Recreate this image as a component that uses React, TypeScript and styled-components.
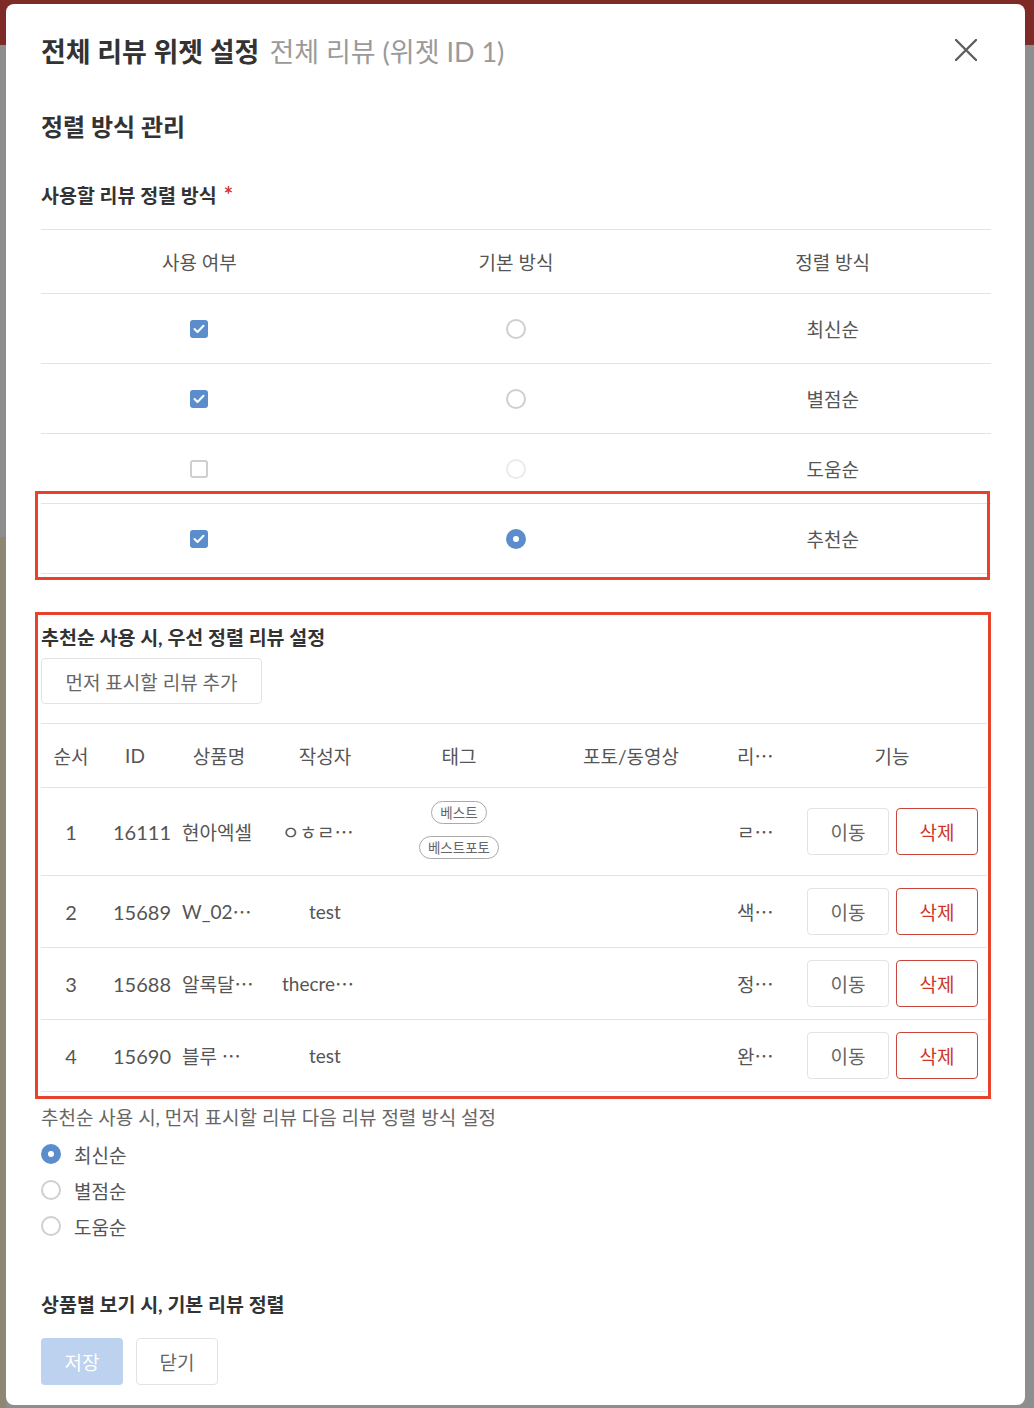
import React from 'react';
import styled, { createGlobalStyle } from 'styled-components';

const GlobalStyle = createGlobalStyle`
  html, body {
    margin: 0;
    padding: 0;
  }
  body {
    min-height: 1408px;
    font-family: Lato, "Noto Sans CJK KR", sans-serif;
    color: #555;
    background:
      linear-gradient(#8e8872, #8e8872) 0 537px / 6px 100% no-repeat,
      linear-gradient(to bottom, #7e2a27 0, #7e2a27 45px, #8e8e8e 45px);
  }
  * {
    box-sizing: border-box;
  }
`;

const Modal = styled.div`
  margin: 4px 9px 0 6px;
  background: #fff;
  border-radius: 8px;
  padding: 0 34px 20px 35px;
`;

const Header = styled.header`
  height: 92px;
  display: flex;
  align-items: center;
  justify-content: space-between;
`;

const Title = styled.h1`
  margin: 0;
  display: flex;
  align-items: baseline;
  gap: 10px;
  font-size: 27px;
  font-weight: 700;
  color: #333;
`;

const SubTitle = styled.span`
  font-weight: 400;
  color: #9a9a9a;
`;

const CloseIcon = styled.button`
  width: 22px;
  height: 22px;
  margin-right: 14px;
  padding: 0;
  border: none;
  background: none;
  display: flex;
  cursor: pointer;
`;

const SectionTitle = styled.h2`
  margin: 16px 0 0;
  font-size: 24px;
  line-height: 30px;
  font-weight: 700;
  color: #333;
`;

const FieldLabel = styled.div`
  margin-top: 41px;
  font-size: 19.5px;
  line-height: 26px;
  font-weight: 700;
  color: #333;
`;

const Required = styled.span`
  margin-left: 7px;
  font-size: 22px;
  line-height: 0;
  font-weight: 700;
  color: #d0342c;
`;

const SortTable = styled.div`
  margin-top: 20px;
  border-top: 1px solid #e3e3e3;
`;

const SortRow = styled.div<{ $height: number; $highlight?: boolean }>`
  position: relative;
  display: grid;
  grid-template-columns: repeat(3, 1fr);
  align-items: center;
  justify-items: center;
  height: ${(p) => p.$height}px;
  border-bottom: 1px solid #e3e3e3;
  font-size: 19px;
  color: #555;

  ${(p) =>
    p.$highlight &&
    `
    &::after {
      content: '';
      position: absolute;
      top: -13px;
      left: -6px;
      right: 1px;
      bottom: -7px;
      border: 3px solid #e8412c;
      pointer-events: none;
    }
  `}
`;

const CheckBox = styled.span<{ $checked: boolean }>`
  width: 18px;
  height: 18px;
  border-radius: 3px;
  display: flex;
  align-items: center;
  justify-content: center;
  background: ${(p) => (p.$checked ? '#5b8dcd' : '#fff')};
  border: ${(p) => (p.$checked ? 'none' : '2px solid #cfcfcf')};
`;

const Radio = styled.span<{ $checked: boolean; $disabled?: boolean }>`
  width: 20px;
  height: 20px;
  border-radius: 50%;
  flex-shrink: 0;
  display: flex;
  align-items: center;
  justify-content: center;
  background: ${(p) => (p.$checked ? '#5b8dcd' : '#fff')};
  border: ${(p) =>
    p.$checked ? 'none' : `2px solid ${p.$disabled ? '#ebebeb' : '#cfcfcf'}`};

  &::after {
    content: '';
    display: ${(p) => (p.$checked ? 'block' : 'none')};
    width: 6px;
    height: 6px;
    border-radius: 50%;
    background: #fff;
  }
`;

const PriorityBox = styled.section`
  margin: 38px 0 0 -6px;
  border: 3px solid #e8412c;
  padding: 11px 1px 4px 3px;
`;

const PriorityTitle = styled.div`
  font-size: 19.5px;
  line-height: 24px;
  font-weight: 700;
  color: #333;
`;

const AddButton = styled.button`
  margin-top: 8px;
  width: 221px;
  height: 46px;
  border: 1px solid #e3e3e3;
  border-radius: 4px;
  background: #fff;
  font-family: inherit;
  font-size: 19px;
  color: #666;
`;

const ReviewTable = styled.div`
  margin-top: 19px;
  border-top: 1px solid #e3e3e3;
`;

const ReviewRow = styled.div<{ $height: number }>`
  display: grid;
  grid-template-columns: 60px 68px 100px 112px 156px 188px 62px 1fr;
  height: ${(p) => p.$height}px;
  border-bottom: 1px solid #e3e3e3;
  font-size: 19px;
  color: #555;
`;

const Cell = styled.div<{ $align?: 'start' | 'center' | 'end'; $pad?: number; $shift?: number }>`
  display: flex;
  align-items: center;
  justify-content: ${(p) =>
    p.$align === 'start' ? 'flex-start' : p.$align === 'end' ? 'flex-end' : 'center'};
  padding: 0 ${(p) => p.$pad ?? 12}px 0 ${(p) => (p.$pad ?? 12) + (p.$shift ?? 0)}px;
  white-space: nowrap;
  min-width: 0;
`;

const Num = styled.span`
  font-size: 20px;
`;

const Dots = styled.span`
  font-family: "Noto Sans CJK KR", sans-serif;
`;

const TagStack = styled.div`
  display: flex;
  flex-direction: column;
  align-items: center;
  gap: 12px;
  margin-top: -4px;
`;

const Tag = styled.span`
  height: 23px;
  padding: 0 8px;
  border: 1px solid #aaa;
  border-radius: 12px;
  display: flex;
  align-items: center;
  font-size: 13.5px;
  color: #666;
`;

const Actions = styled.div`
  display: flex;
  gap: 7px;
`;

const RowButton = styled.button<{ $danger?: boolean }>`
  width: 82px;
  height: 47px;
  border-radius: 4px;
  background: #fff;
  font-family: inherit;
  font-size: 19px;
  border: 1px solid ${(p) => (p.$danger ? '#c9463d' : '#e3e3e3')};
  color: ${(p) => (p.$danger ? '#d0352b' : '#666')};
`;

const NextSortLabel = styled.div`
  margin-top: 7px;
  font-size: 19px;
  line-height: 24px;
  color: #666;
`;

const RadioList = styled.div`
  margin-top: 6px;
`;

const RadioOption = styled.label`
  height: 36px;
  display: flex;
  align-items: center;
  gap: 13px;
  font-size: 19px;
  color: #555;
`;

const BottomTitle = styled.div`
  margin-top: 48px;
  font-size: 19.5px;
  line-height: 26px;
  font-weight: 700;
  color: #333;
`;

const Footer = styled.div`
  margin-top: 20px;
  display: flex;
  gap: 13px;
`;

const FooterButton = styled.button<{ $primary?: boolean }>`
  width: 82px;
  height: 47px;
  border-radius: 4px;
  font-family: inherit;
  font-size: 19px;
  background: ${(p) => (p.$primary ? '#bcd2ee' : '#fff')};
  color: ${(p) => (p.$primary ? '#fff' : '#666')};
  border: ${(p) => (p.$primary ? 'none' : '1px solid #e3e3e3')};
`;

const Check = () => (
  <svg width="12" height="10" viewBox="0 0 12 10">
    <polyline
      points="1.5,5 4.5,8 10.5,1.8"
      fill="none"
      stroke="#fff"
      strokeWidth="2"
      strokeLinecap="round"
      strokeLinejoin="round"
    />
  </svg>
);

// Text cut off by the column, shown with a centred ellipsis
const Cut = ({ text, cut = true }: { text: string; cut?: boolean }) => (
  <>
    {text}
    {cut && <Dots>⋯</Dots>}
  </>
);

const sortMethods = [
  { name: '최신순', used: true, base: false, disabled: false },
  { name: '별점순', used: true, base: false, disabled: false },
  { name: '도움순', used: false, base: false, disabled: true },
  { name: '추천순', used: true, base: true, disabled: false },
];

type Review = {
  order: number;
  id: string;
  product: [string, boolean];
  writer: [string, boolean];
  tags: string[];
  content: string;
};

const reviews: Review[] = [
  { order: 1, id: '16111', product: ['현아엑셀', false], writer: ['ㅇㅎㄹ', true], tags: ['베스트', '베스트포토'], content: 'ㄹ' },
  { order: 2, id: '15689', product: ['W_02', true], writer: ['test', false], tags: [], content: '색' },
  { order: 3, id: '15688', product: ['알록달', true], writer: ['thecre', true], tags: [], content: '정' },
  { order: 4, id: '15690', product: ['블루\u00a0', true], writer: ['test', false], tags: [], content: '완' },
];

export default function App() {
  return (
    <>
      <GlobalStyle />
      <Modal>
        <Header>
          <Title>
            전체 리뷰 위젯 설정
            <SubTitle>전체 리뷰 (위젯 ID 1)</SubTitle>
          </Title>
          <CloseIcon aria-label="닫기">
            <svg width="22" height="22" viewBox="0 0 22 22">
              <path d="M1 1 21 21M21 1 1 21" stroke="#5e5e5e" strokeWidth="2.4" strokeLinecap="round" />
            </svg>
          </CloseIcon>
        </Header>

        <SectionTitle>정렬 방식 관리</SectionTitle>
        <FieldLabel>
          사용할 리뷰 정렬 방식<Required>*</Required>
        </FieldLabel>

        <SortTable>
          <SortRow $height={64}>
            <span>사용 여부</span>
            <span>기본 방식</span>
            <span>정렬 방식</span>
          </SortRow>
          {sortMethods.map((m) => (
            <SortRow key={m.name} $height={70} $highlight={m.base}>
              <CheckBox $checked={m.used}>{m.used && <Check />}</CheckBox>
              <Radio $checked={m.base} $disabled={m.disabled} />
              <span>{m.name}</span>
            </SortRow>
          ))}
        </SortTable>

        <PriorityBox>
          <PriorityTitle>추천순 사용 시, 우선 정렬 리뷰 설정</PriorityTitle>
          <AddButton>먼저 표시할 리뷰 추가</AddButton>
          <ReviewTable>
            <ReviewRow $height={64}>
              <Cell>순서</Cell>
              <Cell>ID</Cell>
              <Cell>상품명</Cell>
              <Cell>작성자</Cell>
              <Cell>태그</Cell>
              <Cell>포토/동영상</Cell>
              <Cell $align="start">
                <Cut text="리" />
              </Cell>
              <Cell $shift={10}>기능</Cell>
            </ReviewRow>
            {reviews.map((r) => (
              <ReviewRow key={r.id} $height={r.tags.length ? 88 : 72}>
                <Cell>
                  <Num>{r.order}</Num>
                </Cell>
                <Cell $align="start">
                  <Num>{r.id}</Num>
                </Cell>
                <Cell $align="start" $pad={13}>
                  <Cut text={r.product[0]} cut={r.product[1]} />
                </Cell>
                <Cell $align={r.writer[1] ? 'start' : 'center'} $pad={13}>
                  <Cut text={r.writer[0]} cut={r.writer[1]} />
                </Cell>
                <Cell>
                  {r.tags.length > 0 && (
                    <TagStack>
                      {r.tags.map((t) => (
                        <Tag key={t}>{t}</Tag>
                      ))}
                    </TagStack>
                  )}
                </Cell>
                <Cell />
                <Cell $align="start">
                  <Cut text={r.content} />
                </Cell>
                <Cell $align="end" $pad={9}>
                  <Actions>
                    <RowButton>이동</RowButton>
                    <RowButton $danger>삭제</RowButton>
                  </Actions>
                </Cell>
              </ReviewRow>
            ))}
          </ReviewTable>
        </PriorityBox>

        <NextSortLabel>추천순 사용 시, 먼저 표시할 리뷰 다음 리뷰 정렬 방식 설정</NextSortLabel>
        <RadioList>
          <RadioOption>
            <Radio $checked />
            최신순
          </RadioOption>
          <RadioOption>
            <Radio $checked={false} />
            별점순
          </RadioOption>
          <RadioOption>
            <Radio $checked={false} />
            도움순
          </RadioOption>
        </RadioList>

        <BottomTitle>상품별 보기 시, 기본 리뷰 정렬</BottomTitle>
        <Footer>
          <FooterButton $primary>저장</FooterButton>
          <FooterButton>닫기</FooterButton>
        </Footer>
      </Modal>
    </>
  );
}
